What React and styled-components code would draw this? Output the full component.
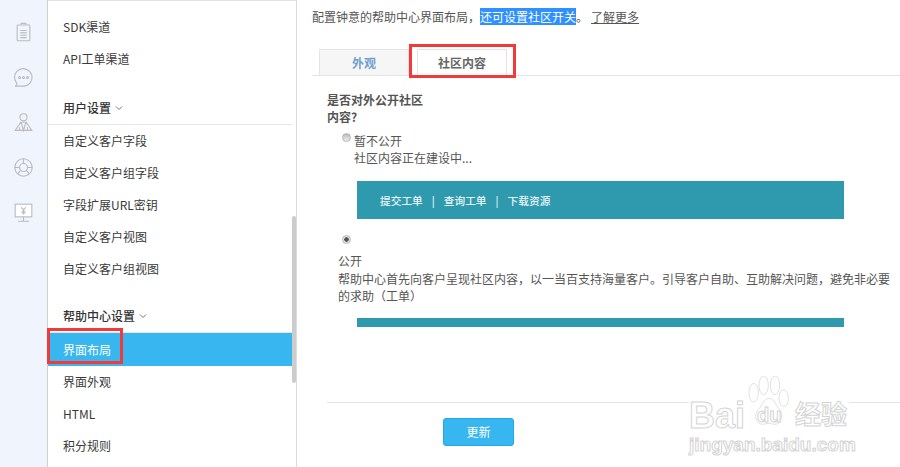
import React from "react";
import styled, { createGlobalStyle } from "styled-components";

const GlobalStyle = createGlobalStyle`
  html, body {
    margin: 0;
    padding: 0;
    background: #ffffff;
    overflow: hidden;
  }
  body {
    font-family: "Noto Sans CJK SC", "Liberation Sans", sans-serif;
    font-size: 12px;
  }
`;

const Page = styled.div`
  position: relative;
  display: flex;
  width: 900px;
  height: 467px;
  overflow: hidden;
`;

const Rail = styled.nav`
  flex: 0 0 48px;
  box-sizing: border-box;
  display: flex;
  flex-direction: column;
  align-items: center;
  gap: 20px;
  padding: 20px 1px 0 0;
  background: #f0f4fc;
  border-right: 1px solid #cfd0d2;
  color: #b9bbc0;
`;

const RailIcon = styled.svg`
  width: 19px;
  height: 25px;
  fill: none;
  stroke: currentColor;
  stroke-width: 1.4;
`;

const Sidebar = styled.aside`
  position: relative;
  flex: 0 0 249px;
  box-sizing: border-box;
  padding: 10px 4px 0 0;
  border-top: 1px solid #e2e2e2;
  border-right: 1px solid #dcdcdc;
  height: 467px;
`;

const Scrollbar = styled.div`
  position: absolute;
  right: 0;
  top: 215px;
  width: 4px;
  height: 167px;
  background: #cccccc;
  border-radius: 2px;
`;

const SectionTitle = styled.div`
  height: 32px;
  line-height: 32px;
  margin-top: ${(p) => p.$top}px;
  padding-left: 15px;
  color: #333333;
  font-weight: 500;
  border-bottom: 1px solid #e6e6e6;
  display: flex;
  align-items: center;
  gap: 4px;
`;

const Chevron = styled.svg`
  width: 8px;
  height: 6px;
  fill: none;
  stroke: #777777;
  stroke-width: 1;
`;

const MenuItem = styled.div`
  position: relative;
  height: ${(p) => (p.$active ? 33 : 32)}px;
  line-height: ${(p) => (p.$active ? 34 : 32)}px;
  padding-left: 15px;
  color: ${(p) => (p.$active ? "#ffffff" : "#3a3a3a")};
  background: ${(p) => (p.$active ? "#38b6f0" : "transparent")};
`;

const SidebarMark = styled.span`
  position: absolute;
  left: -1px;
  top: -5px;
  width: 76px;
  height: 36px;
  box-sizing: border-box;
  border: 3px solid #f33a3a;
`;

const Main = styled.main`
  flex: 1;
  min-width: 0;
  padding-left: 15px;
`;

const Intro = styled.p`
  margin: 8px 0 0 0;
  height: 18px;
  line-height: 18px;
  color: #555555;
  white-space: pre;
`;

const Selected = styled.span`
  background: #2f90ff;
  color: #ffffff;
`;

const MoreLink = styled.a`
  color: #555555;
  text-decoration: underline;
  margin-left: 3px;
`;

const Tabs = styled.div`
  display: flex;
  gap: 8px;
  margin-top: 23px;
  padding-left: 7px;
  height: 26px;
  border-bottom: 1px solid #e4e4e4;
`;

const Tab = styled.div`
  position: relative;
  box-sizing: border-box;
  width: 90px;
  height: 27px;
  line-height: 25px;
  text-align: center;
  font-weight: 700;
  border: 1px solid #e4e4e4;
  border-bottom: ${(p) => (p.$current ? "1px solid #ffffff" : "1px solid #e4e4e4")};
  background: ${(p) => (p.$current ? "#ffffff" : "#f6f6f6")};
  color: ${(p) => (p.$current ? "#666666" : "#6f9fd0")};
`;

const TabMark = styled.span`
  position: absolute;
  left: -9px;
  right: -10px;
  top: -6px;
  bottom: -3px;
  border: 3px solid #f33a3a;
`;

const Form = styled.div`
  padding: 15px 0 0 15px;
  color: #555555;
  line-height: 17px;
`;

const Question = styled.div`
  width: 100px;
  font-weight: 700;
  color: #555555;
`;

const Option = styled.div`
  display: flex;
  gap: 3px;
  margin-left: 15px;
  margin-top: 7px;
`;

const RadioDot = styled.span`
  flex: none;
  box-sizing: border-box;
  width: 9px;
  height: 9px;
  margin-top: 1px;
  border-radius: 50%;
  border: 1px solid #b5b5b5;
  background: ${(p) =>
    p.$checked
      ? "radial-gradient(circle, #555555 0 2px, #e8e8e8 2.5px)"
      : "linear-gradient(#b9b9b9, #efefef)"};
`;

const Banner = styled.div`
  display: flex;
  align-items: center;
  width: 487px;
  height: 38px;
  margin: 15px 0 0 30px;
  padding-left: 23px;
  box-sizing: border-box;
  background: #2f9aad;
  color: #e9f6f8;
  font-size: 10.7px;
  font-weight: 500;
`;

const BannerSep = styled.span`
  margin: 0 9px;
`;

const SoloRadio = styled.div`
  display: flex;
  margin: 15px 0 0 15px;
  height: 12px;
`;

const OpenBlock = styled.div`
  margin: 6px 0 0 11px;
  width: 556px;
  line-height: 17.5px;
`;

const ThinBanner = styled.div`
  width: 487px;
  height: 9px;
  margin: 13px 0 0 30px;
  background: #2f9aad;
`;

const Footer = styled.div`
  margin: 75px 0 0 0;
  padding: 15px 0 0 116px;
  border-top: 1px solid #e4e4e4;
`;

const SaveButton = styled.button`
  width: 71px;
  height: 28px;
  padding: 0;
  font: inherit;
  color: #ffffff;
  background: #38b6f0;
  border: 1px solid #1fa8e8;
  border-radius: 3px;
`;

const Watermark = styled.div`
  position: absolute;
  left: 689px;
  top: 375px;
  width: 160px;
  height: 80px;
  background: #ffffff;
  pointer-events: none;
`;

const PawIcon = styled.svg`
  position: absolute;
  left: 56px;
  top: 1px;
  width: 48px;
  height: 52px;
  fill: #ffffff;
  stroke: #d8d8d8;
  stroke-width: 1;
`;

const WmText = styled.span`
  position: absolute;
  left: ${(p) => p.$x}px;
  top: ${(p) => p.$y}px;
  font-family: "Liberation Sans", "Noto Sans CJK SC", sans-serif;
  font-size: ${(p) => p.$size}px;
  line-height: 1;
  font-weight: 700;
  color: #ffffff;
  -webkit-text-stroke: 1px #d4d4d4;
  white-space: nowrap;
`;

const ClipboardIcon = () => (
  <RailIcon viewBox="0 0 24 25">
    <rect x="4" y="3" width="16" height="20" rx="1" />
    <path d="M9 3V1h6v2M8 10h8M8 13h8M8 16h8M8 19h8" />
  </RailIcon>
);

const ChatIcon = () => (
  <RailIcon viewBox="0 0 24 25">
    <path d="M2 23c1.600-.8 2-1.800 1.600-3.200A11 11 0 1 1 12 23.400H2z" />
    <circle cx="7" cy="12.500" r="1.200" />
    <circle cx="12" cy="12.500" r="1.200" />
    <circle cx="17" cy="12.500" r="1.200" />
  </RailIcon>
);

const AgentIcon = () => (
  <RailIcon viewBox="0 0 24 25">
    <circle cx="12" cy="6" r="4.500" />
    <path d="M9 11.500 1.500 22.500h21L15 11.500M9 12l3 10.500 3-10.500M10.500 12h3M7 22.500v-4M17 22.500v-4" />
  </RailIcon>
);

const WheelIcon = () => (
  <RailIcon viewBox="0 0 24 25">
    <circle cx="12" cy="12.500" r="11" />
    <circle cx="12" cy="12.500" r="5" />
    <path d="M12 1.500v6M1 12.500h6M17 12.500h6M8.500 16l-4 4.500M15.500 16l4 4.500" />
  </RailIcon>
);

const ScreenIcon = () => (
  <RailIcon viewBox="0 0 24 25">
    <rect x="1.500" y="2" width="21" height="16" fill="#ffffff" />
    <path d="M12 18v5M5 23.500h14M9 6l3 3 3-3M12 9v6M9.500 11h5M9.500 13h5" />
  </RailIcon>
);

const ChevronDown = () => (
  <Chevron viewBox="0 0 8 6">
    <path d="M1 1.500 4 4.500 7 1.500" />
  </Chevron>
);

export default function App() {
  return (
    <Page>
      <GlobalStyle />
      <Rail>
        <ClipboardIcon />
        <ChatIcon />
        <AgentIcon />
        <WheelIcon />
        <ScreenIcon />
      </Rail>

      <Sidebar>
        <MenuItem>SDK渠道</MenuItem>
        <MenuItem>API工单渠道</MenuItem>

        <SectionTitle $top={17}>
          用户设置 <ChevronDown />
        </SectionTitle>
        <MenuItem>自定义客户字段</MenuItem>
        <MenuItem>自定义客户组字段</MenuItem>
        <MenuItem>字段扩展URL密钥</MenuItem>
        <MenuItem>自定义客户视图</MenuItem>
        <MenuItem>自定义客户组视图</MenuItem>

        <SectionTitle $top={15}>
          帮助中心设置 <ChevronDown />
        </SectionTitle>
        <MenuItem $active>
          界面布局
          <SidebarMark />
        </MenuItem>
        <MenuItem>界面外观</MenuItem>
        <MenuItem>HTML</MenuItem>
        <MenuItem>积分规则</MenuItem>
        <Scrollbar />
      </Sidebar>

      <Main>
        <Intro>
          配置钟意的帮助中心界面布局，<Selected>还可设置社区开关</Selected>。
          <MoreLink>了解更多</MoreLink>
        </Intro>

        <Tabs>
          <Tab>外观</Tab>
          <Tab $current>
            社区内容
            <TabMark />
          </Tab>
        </Tabs>

        <Form>
          <Question>是否对外公开社区内容?</Question>
          <Option>
            <RadioDot />
            <div>
              暂不公开
              <br />
              社区内容正在建设中...
            </div>
          </Option>
          <Banner>
            提交工单<BannerSep>|</BannerSep>查询工单<BannerSep>|</BannerSep>下载资源
          </Banner>
          <SoloRadio>
            <RadioDot $checked />
          </SoloRadio>
          <OpenBlock>
            公开
            <br />
            帮助中心首先向客户呈现社区内容，以一当百支持海量客户。引导客户自助、互助解决问题，避免非必要的求助（工单）
          </OpenBlock>
          <ThinBanner />
          <Footer>
            <SaveButton>更新</SaveButton>
          </Footer>
        </Form>
      </Main>

      <Watermark>
        <PawIcon viewBox="0 0 72 56" preserveAspectRatio="none">
          <ellipse cx="13" cy="18" rx="7" ry="10" />
          <ellipse cx="28" cy="10" rx="7" ry="10" />
          <ellipse cx="45" cy="10" rx="7" ry="10" />
          <ellipse cx="58" cy="24" rx="7" ry="9" />
          <path d="M36 24c8 0 10 8 16 12 6 5 3 16-7 16-4 0-6-1-9-1s-6 1-10 1c-10 0-13-10-6-16 6-4 8-12 16-12z" />
        </PawIcon>
        <WmText $x={0} $y={23} $size={36}>
          Bai
        </WmText>
        <WmText $x={68} $y={30} $size={20}>
          du
        </WmText>
        <WmText $x={106} $y={27} $size={26}>
          经验
        </WmText>
        <WmText $x={0} $y={60} $size={19}>
          jingyan.baidu.com
        </WmText>
      </Watermark>
    </Page>
  );
}
